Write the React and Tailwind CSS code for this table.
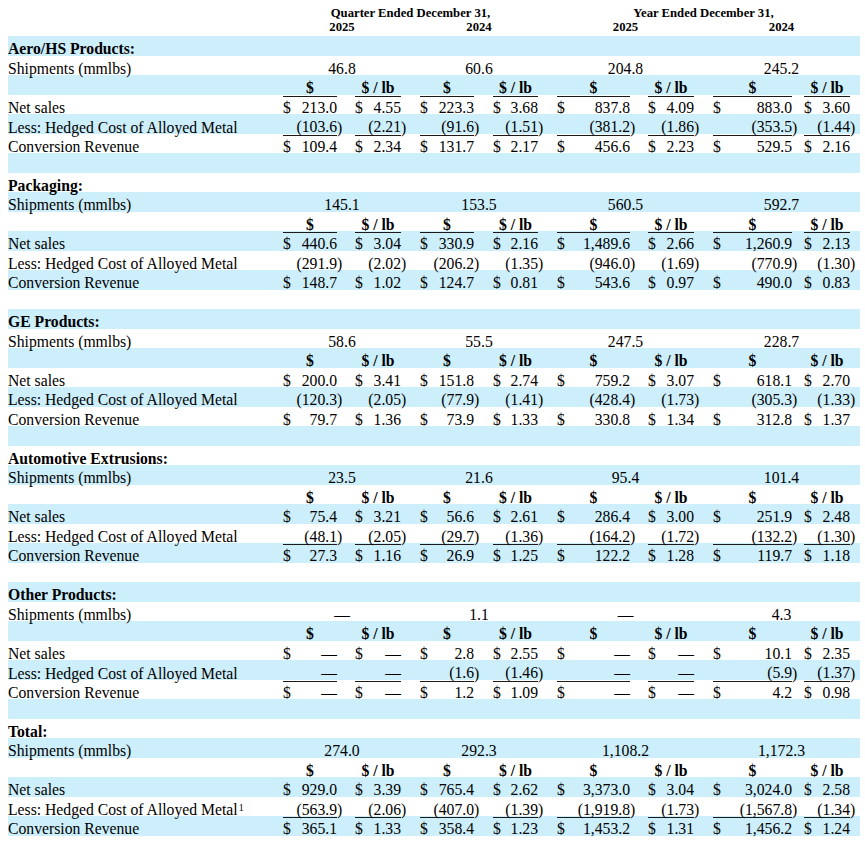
import React from "react";

const GRID =
  "grid grid-cols-[275px_54px_18px_46px_19px_54px_19px_45px_19px_73px_18px_46px_19px_79px_12px_46px_10px]";

const sections = [
  {
    title: "Aero/HS Products:",
    ship: ["46.8", "60.6", "204.8", "245.2"],
    net: ["213.0", "4.55", "223.3", "3.68", "837.8", "4.09", "883.0", "3.60"],
    less: ["(103.6)", "(2.21)", "(91.6)", "(1.51)", "(381.2)", "(1.86)", "(353.5)", "(1.44)"],
    conv: ["109.4", "2.34", "131.7", "2.17", "456.6", "2.23", "529.5", "2.16"],
    headUl: true,
    lessUl: true,
  },
  {
    title: "Packaging:",
    ship: ["145.1", "153.5", "560.5", "592.7"],
    net: ["440.6", "3.04", "330.9", "2.16", "1,489.6", "2.66", "1,260.9", "2.13"],
    less: ["(291.9)", "(2.02)", "(206.2)", "(1.35)", "(946.0)", "(1.69)", "(770.9)", "(1.30)"],
    conv: ["148.7", "1.02", "124.7", "0.81", "543.6", "0.97", "490.0", "0.83"],
    headUl: true,
    lessUl: false,
  },
  {
    title: "GE Products:",
    ship: ["58.6", "55.5", "247.5", "228.7"],
    net: ["200.0", "3.41", "151.8", "2.74", "759.2", "3.07", "618.1", "2.70"],
    less: ["(120.3)", "(2.05)", "(77.9)", "(1.41)", "(428.4)", "(1.73)", "(305.3)", "(1.33)"],
    conv: ["79.7", "1.36", "73.9", "1.33", "330.8", "1.34", "312.8", "1.37"],
    headUl: false,
    lessUl: false,
  },
  {
    title: "Automotive Extrusions:",
    ship: ["23.5", "21.6", "95.4", "101.4"],
    net: ["75.4", "3.21", "56.6", "2.61", "286.4", "3.00", "251.9", "2.48"],
    less: ["(48.1)", "(2.05)", "(29.7)", "(1.36)", "(164.2)", "(1.72)", "(132.2)", "(1.30)"],
    conv: ["27.3", "1.16", "26.9", "1.25", "122.2", "1.28", "119.7", "1.18"],
    headUl: false,
    lessUl: true,
  },
  {
    title: "Other Products:",
    ship: ["—", "1.1", "—", "4.3"],
    net: ["—", "—", "2.8", "2.55", "—", "—", "10.1", "2.35"],
    less: ["—", "—", "(1.6)", "(1.46)", "—", "—", "(5.9)", "(1.37)"],
    conv: ["—", "—", "1.2", "1.09", "—", "—", "4.2", "0.98"],
    headUl: false,
    lessUl: true,
  },
  {
    title: "Total:",
    ship: ["274.0", "292.3", "1,108.2", "1,172.3"],
    net: ["929.0", "3.39", "765.4", "2.62", "3,373.0", "3.04", "3,024.0", "2.58"],
    less: ["(563.9)", "(2.06)", "(407.0)", "(1.39)", "(1,919.8)", "(1.73)", "(1,567.8)", "(1.34)"],
    conv: ["365.1", "1.33", "358.4", "1.23", "1,453.2", "1.31", "1,456.2", "1.24"],
    headUl: false,
    lessUl: true,
    note: true,
  },
];

// each row is one grid line; blue rows alternate down the table
function Row({ blue, children }) {
  return (
    <div
      className={`${GRID} h-[19.5px] pt-[5px] box-border items-stretch ${blue ? "bg-[#cdeefb]" : ""}`}
    >
      {children}
    </div>
  );
}

function Label({ children, bold }) {
  return (
    <div className={`flex items-center whitespace-nowrap ${bold ? "font-bold" : ""}`}>
      {children}
    </div>
  );
}

function ValueRow({ label, values, dollar, ul, note, blue }) {
  const cells = [];
  values.forEach((v, i) => {
    const neg = v.endsWith(")");
    const text = neg ? v.slice(0, -1) : v;
    cells.push(
      <div
        key={"v" + i}
        className={`flex items-center justify-between whitespace-nowrap ${ul ? "border-b border-[#1a1a1a]" : ""}`}
      >
        <span>{dollar ? "$" : ""}</span>
        <span>{text}</span>
      </div>
    );
    cells.push(
      <div key={"p" + i} className="flex items-center">
        {neg ? ")" : ""}
      </div>
    );
  });
  return (
    <Row blue={blue}>
      <Label>
        {label}
        {note && <sup className="text-[10px] relative -top-[2px] ml-[1px]">1</sup>}
      </Label>
      {cells}
    </Row>
  );
}

function HeadRow({ ul, blue }) {
  const cells = [];
  for (let i = 0; i < 8; i++) {
    cells.push(
      <div
        key={"h" + i}
        className={`flex items-center justify-center font-bold whitespace-nowrap ${ul ? "border-b border-[#1a1a1a]" : ""}`}
      >
        {i % 2 === 0 ? "$" : "$ / lb"}
      </div>
    );
    cells.push(<div key={"g" + i} />);
  }
  return (
    <Row blue={blue}>
      <div />
      {cells}
    </Row>
  );
}

function ShipRow({ values, blue }) {
  return (
    <Row blue={blue}>
      <Label>Shipments (mmlbs)</Label>
      {values.map((v, i) => (
        <React.Fragment key={i}>
          <div className="col-span-3 flex items-center justify-center">{v}</div>
          <div />
        </React.Fragment>
      ))}
    </Row>
  );
}

export default function App() {
  let idx = 0;
  const next = () => idx++ % 2 === 0;
  const body = [];
  sections.forEach((s, si) => {
    body.push(
      <Row key={si + "t"} blue={next()}>
        <Label bold>{s.title}</Label>
      </Row>
    );
    body.push(<ShipRow key={si + "s"} values={s.ship} blue={next()} />);
    body.push(<HeadRow key={si + "h"} ul={s.headUl} blue={next()} />);
    body.push(<ValueRow key={si + "n"} label="Net sales" values={s.net} dollar blue={next()} />);
    body.push(
      <ValueRow
        key={si + "l"}
        label="Less: Hedged Cost of Alloyed Metal"
        values={s.less}
        ul={s.lessUl}
        note={s.note}
        blue={next()}
      />
    );
    body.push(
      <ValueRow key={si + "c"} label="Conversion Revenue" values={s.conv} dollar blue={next()} />
    );
    if (si < sections.length - 1) {
      body.push(<Row key={si + "b"} blue={next()} />);
    }
  });

  return (
    <div className="min-h-screen w-[865px] bg-white text-black font-['Liberation_Serif','Times_New_Roman',serif] text-[15.7px] leading-none">
      <div className="ml-2 w-[852px] pt-[5px]">
        <div className={`${GRID} h-[16px] text-[12.7px] font-bold`}>
          <div />
          <div className="col-span-7 flex items-center justify-center whitespace-nowrap">
            Quarter Ended December 31,
          </div>
          <div />
          <div className="col-span-7 flex items-center justify-center whitespace-nowrap">
            Year Ended December 31,
          </div>
          <div />
        </div>
        <div className={`${GRID} h-[15px] text-[12.7px] font-bold`}>
          <div />
          {["2025", "2024", "2025", "2024"].map((y, i) => (
            <React.Fragment key={i}>
              <div className="col-span-3 flex items-start justify-center">{y}</div>
              <div />
            </React.Fragment>
          ))}
        </div>
        {body}
      </div>
    </div>
  );
}
